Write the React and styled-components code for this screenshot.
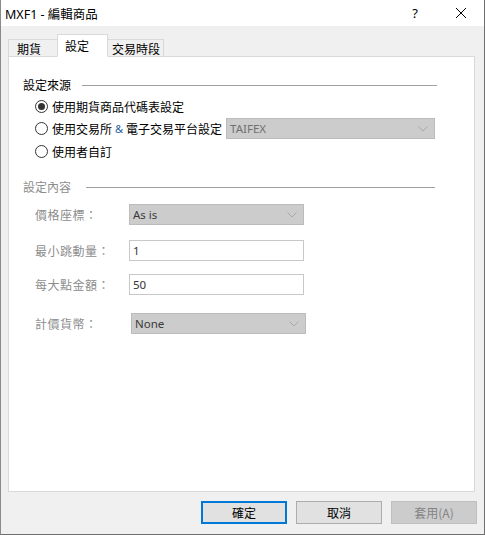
import React from "react";
import styled, { createGlobalStyle } from "styled-components";

const Global = createGlobalStyle`
  html, body { margin: 0; padding: 0; background: #f0f0f0; }
  body { font-family: "Noto Sans CJK TC", "Noto Sans", sans-serif; }
`;

const Window = styled.div`
  width: 485px;
  height: 535px;
  box-sizing: border-box;
  border-left: 1px solid #8a8a8a;
  border-right: 1px solid #6f6f6f;
  border-bottom: 1px solid #6f6f6f;
  background: #f0f0f0;
  display: flex;
  flex-direction: column;
  font-size: 12px;
  color: #000;
`;

const TitleBar = styled.div`
  height: 26px;
  background: #fff;
  display: flex;
  align-items: center;
  padding-left: 4px;
  font-family: "Noto Sans", "Noto Sans CJK TC", sans-serif;
  font-size: 12.5px;
`;

const Title = styled.div`
  flex: 1;
`;

const TitleButton = styled.div`
  width: 46px;
  height: 26px;
  display: flex;
  align-items: center;
  justify-content: center;
  font-size: 13px;
`;

const Body = styled.div`
  flex: 1;
  display: flex;
  flex-direction: column;
  padding: 8px 9px 0 7px;
`;

const Tabs = styled.div`
  display: flex;
  align-items: flex-end;
  height: 22px;
  position: relative;
  z-index: 1;
`;

const Tab = styled.div`
  box-sizing: border-box;
  width: ${(p) => p.$w}px;
  height: ${(p) => (p.$active ? 23 : 17)}px;
  background: ${(p) => (p.$active ? "#fff" : "#f0f0f0")};
  border: 1px solid #d9d9d9;
  border-bottom: ${(p) => (p.$active ? "1px solid #fff" : "none")};
  margin-left: ${(p) => (p.$first ? 0 : -1)}px;
  display: flex;
  align-items: center;
  padding-left: ${(p) => p.$pl}px;
  padding-top: ${(p) => (p.$active ? 0 : 1)}px;
  font-size: 12px;
  margin-bottom: ${(p) => (p.$active ? -1 : 0)}px;
`;

const Panel = styled.div`
  box-sizing: border-box;
  height: 436px;
  width: 467px;
  background: #fff;
  border: 1px solid #d9d9d9;
  padding: 18px 0 0 14px;
`;

const GroupHeader = styled.div`
  display: flex;
  align-items: center;
  width: ${(p) => p.$w}px;
  color: ${(p) => (p.$disabled ? "#8d8d8d" : "#000")};
  height: 18px;
  margin-top: ${(p) => p.$mt || 0}px;
  &::after {
    content: "";
    flex: 1;
    height: 1px;
    background: #a0a0a0;
    margin-left: ${(p) => p.$gap}px;
    margin-top: 3px;
  }
`;

const RadioList = styled.div`
  display: flex;
  flex-direction: column;
  padding-left: 12px;
  margin-top: 2px;
`;

const RadioRow = styled.label`
  display: flex;
  align-items: center;
  height: ${(p) => p.$h}px;
`;

const RadioCircle = styled.span`
  box-sizing: border-box;
  width: 13px;
  height: 13px;
  border-radius: 50%;
  border: 1px solid #333;
  margin-right: 4px;
  display: flex;
  align-items: center;
  justify-content: center;
  &::after {
    content: "";
    display: ${(p) => (p.$checked ? "block" : "none")};
    width: 7px;
    height: 7px;
    border-radius: 50%;
    background: #333;
  }
`;

const Amp = styled.span`
  color: #1f5ea8;
  margin: 0 3px;
  font-family: "Noto Sans", sans-serif;
  font-size: 11px;
`;

const Combo = styled.div`
  box-sizing: border-box;
  width: ${(p) => p.$w}px;
  height: 21px;
  background: #cccccc;
  border: 1px solid #bcbcbc;
  display: flex;
  align-items: center;
  justify-content: space-between;
  padding: 0 6px 0 3px;
  color: ${(p) => (p.$muted ? "#707070" : "#3a3a3a")};
  font-family: "Noto Sans", sans-serif;
  font-size: 11.5px;
  margin-left: ${(p) => p.$ml || 0}px;
`;

const Chevron = () => (
  <svg width="10" height="6" viewBox="0 0 10 6">
    <path d="M0.5 0.5 L5 5 L9.5 0.5" fill="none" stroke="#a8a8a8" strokeWidth="1" />
  </svg>
);

const FieldList = styled.div`
  display: flex;
  flex-direction: column;
  padding-left: 12px;
  margin-top: 9px;
`;

const FieldRow = styled.div`
  display: flex;
  align-items: center;
  height: 21px;
  margin-top: ${(p) => p.$mt || 0}px;
`;

const FieldLabel = styled.div`
  width: 94px;
  color: #8d8d8d;
  letter-spacing: 0.5px;
`;

const TextBox = styled.div`
  box-sizing: border-box;
  width: 175px;
  height: 21px;
  border: 1px solid #c8c8c8;
  background: #fff;
  display: flex;
  align-items: center;
  padding-left: 3px;
  color: #333;
  font-family: "Noto Sans", sans-serif;
  font-size: 11.5px;
`;

const ButtonBar = styled.div`
  display: flex;
  justify-content: flex-end;
  gap: 9px;
  padding: 9px 0 0 0;
  margin-right: -2px;
`;

const Button = styled.div`
  box-sizing: border-box;
  width: 86px;
  height: 23px;
  background: ${(p) => (p.$disabled ? "#cccccc" : "#e1e1e1")};
  border: ${(p) => (p.$default ? "2px solid #0078d7" : p.$disabled ? "1px solid #bfbfbf" : "1px solid #adadad")};
  color: ${(p) => (p.$disabled ? "#838383" : "#000")};
  display: flex;
  align-items: center;
  justify-content: center;
  font-size: 12px;
`;

export default function App() {
  return (
    <>
      <Global />
      <Window>
        <TitleBar>
          <Title>MXF1 - 編輯商品</Title>
          <TitleButton>?</TitleButton>
          <TitleButton>
            <svg width="12" height="12" viewBox="0 0 12 12">
              <path d="M1 1 L11 11 M11 1 L1 11" stroke="#000" strokeWidth="1" />
            </svg>
          </TitleButton>
        </TitleBar>
        <Body>
          <Tabs>
            <Tab $first $w={50} $pl={8}>期貨</Tab>
            <Tab $active $w={51} $pl={7}>設定</Tab>
            <Tab $w={57} $pl={4}>交易時段</Tab>
          </Tabs>
          <Panel>
            <GroupHeader $w={414} $gap={11}>設定來源</GroupHeader>
            <RadioList>
              <RadioRow $h={22}>
                <RadioCircle $checked />
                使用期貨商品代碼表設定
              </RadioRow>
              <RadioRow $h={23}>
                <RadioCircle />
                使用交易所<Amp>&amp;</Amp>電子交易平台設定
                <Combo $w={209} $ml={4} $muted>
                  TAIFEX
                  <Chevron />
                </Combo>
              </RadioRow>
              <RadioRow $h={22}>
                <RadioCircle />
                使用者自訂
              </RadioRow>
            </RadioList>
            <GroupHeader $w={412} $gap={15} $mt={15} $disabled>設定內容</GroupHeader>
            <FieldList>
              <FieldRow>
                <FieldLabel>價格座標：</FieldLabel>
                <Combo $w={175}>
                  As is
                  <Chevron />
                </Combo>
              </FieldRow>
              <FieldRow $mt={15}>
                <FieldLabel>最小跳動量：</FieldLabel>
                <TextBox>1</TextBox>
              </FieldRow>
              <FieldRow $mt={13}>
                <FieldLabel>每大點金額：</FieldLabel>
                <TextBox>50</TextBox>
              </FieldRow>
              <FieldRow $mt={18}>
                <FieldLabel>計價貨幣：</FieldLabel>
                <Combo $w={175} $ml={2}>
                  None
                  <Chevron />
                </Combo>
              </FieldRow>
            </FieldList>
          </Panel>
          <ButtonBar>
            <Button $default>確定</Button>
            <Button>取消</Button>
            <Button $disabled>套用(A)</Button>
          </ButtonBar>
        </Body>
      </Window>
    </>
  );
}
